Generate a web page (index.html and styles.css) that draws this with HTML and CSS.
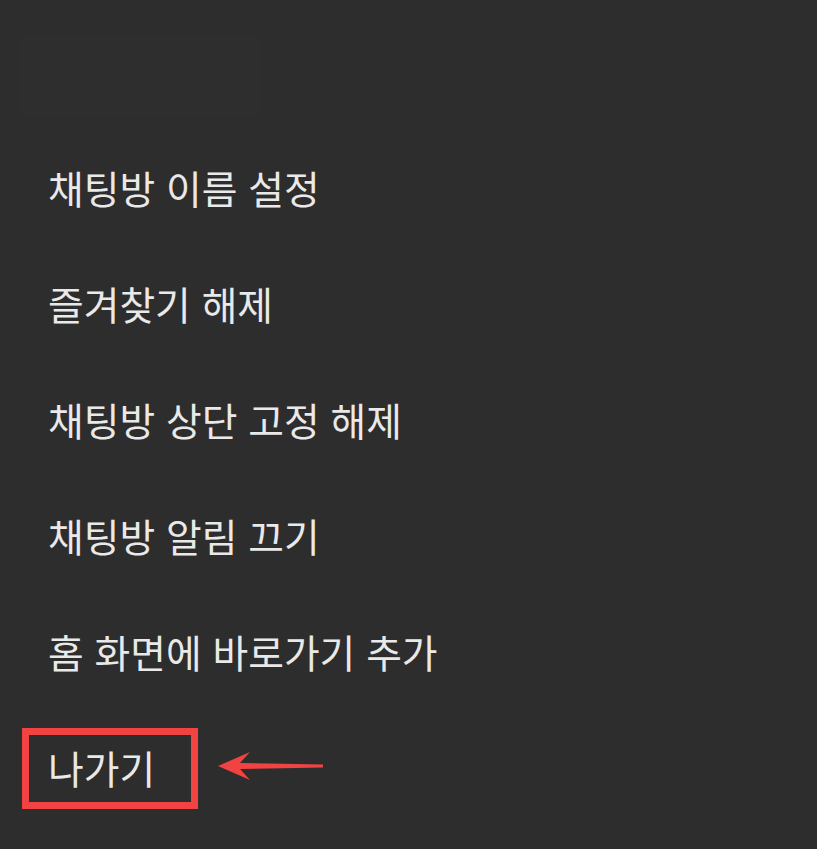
FILE: index.html
```html
<!DOCTYPE html>
<html lang="ko">
<head>
    <meta charset="UTF-8">
    <meta name="viewport" content="width=device-width, initial-scale=1.0">
    <title>채팅방 메뉴</title>
    <link rel="stylesheet" href="styles.css">
</head>
<body>
    <div class="sheet">
        <!-- 상단 영역 -->
        <div class="sheet-top">
            <div class="sheet-ghost"></div>
        </div>

        <!-- 메뉴 목록 -->
        <ul class="menu">
            <li class="menu-item">채팅방 이름 설정</li>
            <li class="menu-item">즐겨찾기 해제</li>
            <li class="menu-item">채팅방 상단 고정 해제</li>
            <li class="menu-item">채팅방 알림 끄기</li>
            <li class="menu-item">홈 화면에 바로가기 추가</li>
            <li class="menu-item menu-item-exit">
                <span class="exit-label">나가기</span>
                <span class="mark-box"></span>
                <svg class="mark-arrow" width="110" height="32" viewBox="0 0 110 32">
                    <path d="M2 16 L34 2 L24 13 L107 14.4 L107 17.4 L24 19 L34 30 Z" fill="#f24343"/>
                </svg>
            </li>
        </ul>
    </div>
</body>
</html>
```

FILE: styles.css
```css
/* Общие стили */
body {
    margin: 0;
    padding: 0;
    background-color: #2d2d2d;
    font-family: "Noto Sans CJK KR", "Noto Sans", sans-serif;
    color: #e9e9e9;
}

.sheet {
    width: 817px;
    height: 849px;
    overflow: hidden;
}

.sheet-top {
    height: 129px;
    padding: 37px 0 0 20px;
    box-sizing: border-box;
}

.sheet-ghost {
    width: 242px;
    height: 78px;
    background-color: #2e2e2e;
}

.menu {
    list-style: none;
    margin: 0;
    padding: 0;
}

.menu-item {
    height: 116px;
    display: flex;
    align-items: center;
    padding-left: 48px;
    font-size: 38.8px;
}

.menu-item-exit {
    position: relative;
}

.mark-box {
    position: absolute;
    left: 22px;
    top: 19px;
    width: 162px;
    height: 67px;
    border: 7px solid #f24343;
}

.mark-arrow {
    position: absolute;
    left: 216px;
    top: 41px;
}
```
